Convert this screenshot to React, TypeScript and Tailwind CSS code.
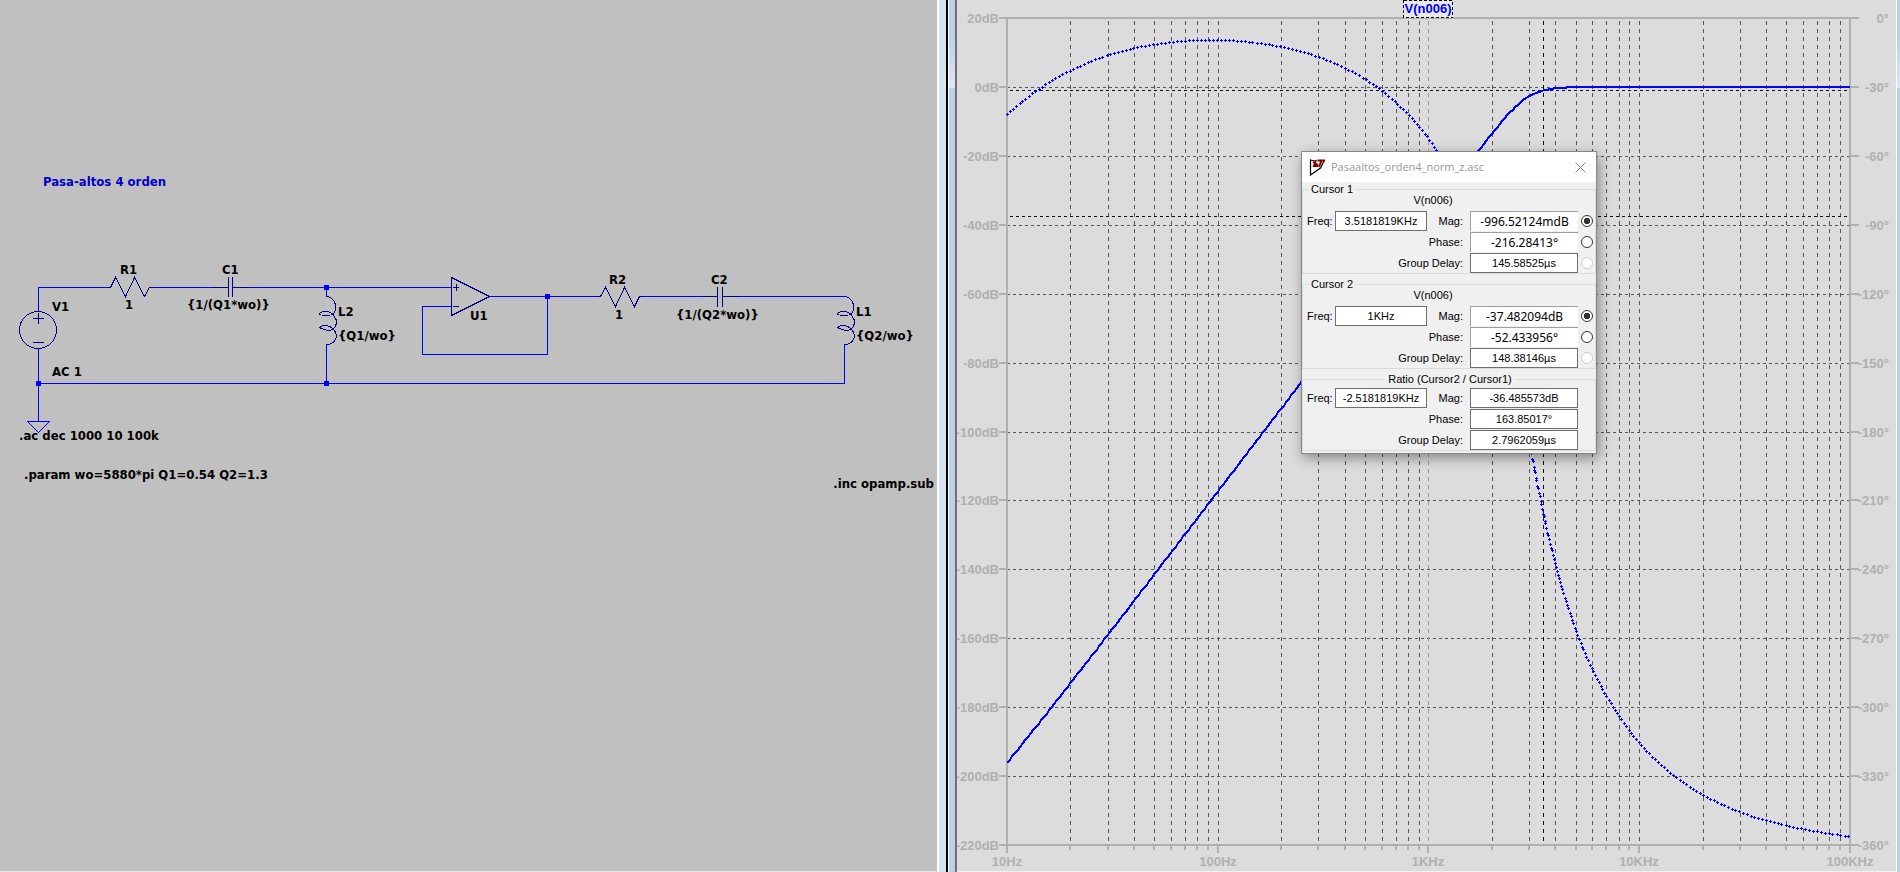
import React from "react";

const CIRCUIT = { f0: 2940, rser: 0.001, gbw: 10e6 };
const PX = { left: 50, decade: 210.7, top: 18, row: 68.92 };
const BLUE = "#0000ff";
const AXIS = "#b0b0b0";
const GRID = "#555555";

type C = [number, number];
const mul = (a: C, b: C): C => [a[0] * b[0] - a[1] * b[1], a[0] * b[1] + a[1] * b[0]];
const div = (a: C, b: C): C => {
  const d = b[0] * b[0] + b[1] * b[1];
  return [(a[0] * b[0] + a[1] * b[1]) / d, (a[1] * b[0] - a[0] * b[1]) / d];
};
const angle = (a: C) => (Math.atan2(a[1], a[0]) * 180) / Math.PI;

/* One series R-C, shunt L section, with the coil's series resistance. */
function section(f: number, q: number): C {
  const r = f / CIRCUIT.f0;
  const zl: C = [CIRCUIT.rser, r * q];
  return div(zl, [1 + zl[0], zl[1] - q / r]);
}

function response(f: number) {
  const buffer = div([1, 0], [1, f / CIRCUIT.gbw]);
  const a = section(f, 0.54);
  const b = section(f, 1.3);
  const h = mul(mul(a, b), buffer);
  return {
    mag: 20 * Math.log10(Math.hypot(h[0], h[1])),
    phase: angle(a) + angle(b) + angle(buffer) - 360,
  };
}

const xOf = (f: number) => PX.left + Math.log10(f / 10) * PX.decade;
const yOfDb = (db: number) => PX.top + ((20 - db) / 20) * PX.row;
const yOfDeg = (deg: number) => PX.top + (-deg / 30) * PX.row;

const samples = Array.from({ length: 1601 }, (_, i) => {
  const f = 10 * Math.pow(10, i / 400);
  const r = response(f);
  return { x: xOf(f), m: yOfDb(r.mag), p: yOfDeg(r.phase) };
});

const magPath =
  "M" + samples.filter((_, i) => i % 5 === 0).map((s) => `${Math.round(s.x)} ${Math.round(s.m)}`).join("L");

const phaseDots: C[] = [];
{
  let run = 4;
  samples.forEach((s, i) => {
    if (i > 0) run += Math.hypot(s.x - samples[i - 1].x, s.p - samples[i - 1].p);
    if (run >= 4) {
      phaseDots.push([Math.round(s.x), Math.round(s.p)]);
      run -= 4;
    }
  });
}
const dotPath = phaseDots.map(([x, y]) => `M${x - 1} ${y}h3v1h-3zM${x} ${y - 1}h1v3h-1z`).join("");

const rows = Array.from({ length: 13 }, (_, i) => i);
const minors: number[] = [];
for (let d = 0; d < 4; d++) for (let k = 1; k < 10; k++) minors.push(k * Math.pow(10, d + 1));
minors.push(100000);

function Plot() {
  const left = Math.round(xOf(10));
  const right = Math.round(xOf(100000));
  const bottom = Math.round(PX.top + 12 * PX.row);
  return (
    <svg
      width="938"
      height="870"
      className="block overflow-visible"
      fontFamily="'Liberation Sans', Arial, sans-serif"
      fontSize="13"
      fontWeight="700"
    >
      <g shapeRendering="crispEdges">
        <g stroke={GRID}>
          {rows.slice(1, 12).map((r) => {
            const y = Math.round(PX.top + r * PX.row) + 0.5;
            return <path key={r} d={`M${left} ${y}H${right}`} strokeDasharray="3 3" />;
          })}
          {minors.slice(1, 36).map((f) => {
            const x = Math.round(xOf(f)) + 0.5;
            return (
              <path key={f} d={`M${x} 21V${bottom}`} strokeDasharray="4 4" stroke={f === 1000 ? "#999999" : GRID} />
            );
          })}
        </g>
        <g stroke="#101010">
          <path d={`M${left + 3} 90.5H${right}`} strokeDasharray="3 3" />
          <path d={`M${left + 3} 216.5H${right}`} strokeDasharray="3 3" />
          <path d={`M${Math.round(xOf(3518.18)) - 0.5} 21V${bottom}`} strokeDasharray="4 4" />
        </g>
        <g stroke={AXIS} strokeWidth="2" fill="none">
          <path
            d={`M${left - 8} 18H${right + 9}M${left} 17V${bottom + 8}M${right} 17V${bottom + 8}M${left - 8} ${bottom}H${right + 9}`}
          />
          {rows.map((r) => {
            const y = Math.round(PX.top + r * PX.row);
            return <path key={r} d={`M${left - 8} ${y}h8M${right} ${y}h9`} />;
          })}
          {minors.map((f, i) => (
            <path key={f} d={`M${Math.round(xOf(f))} ${bottom}v${i % 9 === 0 ? 8 : 5}`} />
          ))}
        </g>
        <path d={dotPath} fill={BLUE} />
        <path d={magPath} stroke={BLUE} strokeWidth="2" fill="none" />
      </g>
      <g fill={AXIS}>
        {rows.map((r) => {
          const y = Math.round(PX.top + r * PX.row) + 5;
          return (
            <React.Fragment key={r}>
              <text x={left - 8} y={y} textAnchor="end">{`${20 - 20 * r}dB`}</text>
              <text x={right + 39} y={y} textAnchor="end">{`${r === 0 ? 0 : -30 * r}°`}</text>
            </React.Fragment>
          );
        })}
        {["10Hz", "100Hz", "1KHz", "10KHz", "100KHz"].map((t, i) => (
          <text key={t} x={Math.round(xOf(Math.pow(10, i + 1)))} y="866" textAnchor="middle">
            {t}
          </text>
        ))}
      </g>
      <rect
        x="446.5"
        y="0.5"
        width="49"
        height="17"
        fill="#e8e8e8"
        stroke="#000"
        strokeDasharray="3 2"
        shapeRendering="crispEdges"
      />
      <text x="471" y="13" fill={BLUE} textAnchor="middle">
        V(n006)
      </text>
    </svg>
  );
}

const coil =
  "M0 0C7 1 10 7 9 13C8 18 5 19 0 19C-4 19 -7 18 -7 17C-6 15 -3 15 0 15C6 15 8 20 10 24C10 29 8 33 3 34C-2 34 -5 32 -7 31C-5 29 -2 29 0 29C6 30 10 35 10 40C9 45 5 48 0 48";

function Schematic() {
  const wire =
    "M38.5 307V287.5H106M153 287.5H212M249 287.5H452M326.5 287V296M326.5 344V383M38.5 353V421M38 383.5H844.5V344M452 306.5H422.5V354.5H547.5V297M490 296.5H598M643 296.5H702M739 296.5H845";
  const nodes: C[] = [
    [326, 287],
    [38, 383],
    [326, 383],
    [547, 296],
  ];
  const notes: [number, number, string][] = [
    [120, 274, "R1"],
    [125, 309, "1"],
    [222, 274, "C1"],
    [187, 309, "{1/(Q1*wo)}"],
    [52, 311, "V1"],
    [52, 376, "AC 1"],
    [338, 316, "L2"],
    [338, 340, "{Q1/wo}"],
    [470, 320, "U1"],
    [609, 284, "R2"],
    [615, 319, "1"],
    [711, 284, "C2"],
    [676, 319, "{1/(Q2*wo)}"],
    [856, 316, "L1"],
    [856, 340, "{Q2/wo}"],
    [19, 440, ".ac dec 1000 10 100k"],
    [24, 479, ".param wo=5880*pi Q1=0.54 Q2=1.3"],
  ];
  return (
    <svg
      width="937"
      height="870"
      className="block"
      fontFamily="'DejaVu Sans Condensed', 'Noto Sans', sans-serif"
      fontSize="13"
      fontWeight="700"
    >
      <g fill="none" stroke="#000080" shapeRendering="crispEdges">
        <path d="M106 287.5H110.5L115.5 277.5L125.5 296.5L134.5 277.5L144.5 296.5L149.5 287.5H153" />
        <path d="M596 296.5H600.5L605.5 287.5L615.5 306.5L624.5 287.5L634.5 306.5L639.5 296.5H643" />
        <path d="M212 287.5H228.5M228.5 277V297M232.5 277V297M232.5 287.5H249" />
        <path d="M702 296.5H717.5M717.5 287V307M722.5 287V307M722.5 296.5H739" />
        <circle cx="38" cy="330" r="18.5" />
        <path d="M38.5 307V312M38.5 348V353M33 318.5H44M38.5 313V324M33 342.5H44" />
        <path d="M451.5 277.5V315.5L489.5 296.5ZM453 287.5H459M456.5 284V291M453 306.5H459" />
        <path d={coil} transform="translate(326.5 296.5)" />
        <path d={coil} transform="translate(844.5 296.5)" />
      </g>
      <path d={wire} fill="none" stroke={BLUE} shapeRendering="crispEdges" />
      <path d="M27.5 421.5H49.5L38.5 432.5Z" fill="none" stroke={BLUE} shapeRendering="crispEdges" />
      {nodes.map(([x, y]) => (
        <rect key={`${x}-${y}`} x={x - 2} y={y - 2} width="5" height="5" fill={BLUE} />
      ))}
      <text x="43" y="186" fill="#0000c8">
        Pasa-altos 4 orden
      </text>
      {notes.map(([x, y, t]) => (
        <text key={`${x}-${y}`} x={x} y={y} fill="#000">
          {t}
        </text>
      ))}
      <text x="934" y="488" fill="#000" textAnchor="end">
        .inc opamp.sub
      </text>
    </svg>
  );
}

type Line = { label: string; value: string; wide?: boolean; state?: "on" | "off" | "disabled" };
type Group = { id: string; title: string; trace?: string; freq: string; lines: Line[] };

const groups: Group[] = [
  {
    id: "c1",
    title: "Cursor 1",
    trace: "V(n006)",
    freq: "3.5181819KHz",
    lines: [
      { label: "Mag:", value: "-996.52124mdB", wide: true, state: "on" },
      { label: "Phase:", value: "-216.28413°", wide: true, state: "off" },
      { label: "Group Delay:", value: "145.58525µs", state: "disabled" },
    ],
  },
  {
    id: "c2",
    title: "Cursor 2",
    trace: "V(n006)",
    freq: "1KHz",
    lines: [
      { label: "Mag:", value: "-37.482094dB", wide: true, state: "on" },
      { label: "Phase:", value: "-52.433956°", wide: true, state: "off" },
      { label: "Group Delay:", value: "148.38146µs", state: "disabled" },
    ],
  },
  {
    id: "ratio",
    title: "Ratio (Cursor2 / Cursor1)",
    freq: "-2.5181819KHz",
    lines: [
      { label: "Mag:", value: "-36.485573dB" },
      { label: "Phase:", value: "163.85017°" },
      { label: "Group Delay:", value: "2.7962059µs" },
    ],
  },
];

const plainBox = "h-5 border border-[#6e6e6e] bg-white text-center text-[11px] outline-none";
const wideBox =
  "h-5 border-t border-l border-[#a0a0a0] bg-white text-center font-['Noto_Sans',sans-serif] text-[12px] outline-none";

function CursorGroup({ g }: { g: Group }) {
  return (
    <fieldset className="border border-[#dcdcdc] pr-[2px] pl-1">
      <legend className={g.trace ? "ml-[2px] px-[2px] leading-[14px]" : "mx-auto px-[3px] leading-[14px]"}>
        {g.title}
      </legend>
      {g.trace ? (
        <div className="-mt-[3px] mb-1 pr-[34px] text-center leading-[14px]">{g.trace}</div>
      ) : (
        <div className="h-[2px]" />
      )}
      <div className="flex flex-col gap-px">
        {g.lines.map((l, i) => (
          <div key={l.label} className="flex h-5 items-center">
            {i === 0 && (
              <>
                <label htmlFor={`${g.id}-freq`} className="w-7">
                  Freq:
                </label>
                <input id={`${g.id}-freq`} defaultValue={g.freq} className={`${plainBox} w-[92px]`} />
              </>
            )}
            <label htmlFor={`${g.id}-${i}`} className="flex-1 pr-[7px] text-right">
              {l.label}
            </label>
            <input
              id={`${g.id}-${i}`}
              defaultValue={l.value}
              className={`${l.wide ? wideBox : plainBox} w-[108px]`}
            />
            <span className="flex w-[15px] justify-end">
              {l.state && (
                <input
                  type="radio"
                  name={g.id}
                  aria-label={`${g.title} ${l.label}`}
                  defaultChecked={l.state === "on"}
                  disabled={l.state === "disabled"}
                  className="size-3 appearance-none rounded-full border border-[#333] bg-white checked:bg-[radial-gradient(circle,#333_0_3px,#fff_3.5px)] disabled:border-[#ccc]"
                />
              )}
            </span>
          </div>
        ))}
      </div>
    </fieldset>
  );
}

function CursorDialog() {
  return (
    <section className="absolute top-[151px] left-[344px] w-[296px] border border-[#888] bg-[#f0f0f0] pb-[2px] font-['Liberation_Sans',Arial,sans-serif] text-[11px] text-black shadow-[2px_4px_12px_rgba(0,0,0,0.4)]">
      <header className="flex h-[30px] items-center bg-white pr-2 pl-[7px]">
        <svg width="17" height="17" viewBox="0 0 17 17" fill="none">
          <path d="M1.5 0.5V16L11.5 9L15.5 1" stroke="#000" strokeWidth="1.2" />
          <path d="M1 1L6 2" stroke="#000" />
          <path d="M7 1L5 7H9M4 3L9 6M8.5 1.5H16M12.5 1.5L10 8" stroke="#800000" strokeWidth="2" />
        </svg>
        <h1 className="ml-[5px] flex-1 font-['Open_Sans','Noto_Sans',sans-serif] text-[11px] text-[#999]">
          Pasaaltos_orden4_norm_z.asc
        </h1>
        <button aria-label="Close" className="flex size-4 items-center justify-center">
          <svg width="11" height="11" viewBox="0 0 11 11">
            <path d="M.5 .5L10.5 10.5M10.5 .5L.5 10.5" stroke="#888" />
          </svg>
        </button>
      </header>
      <div className="flex flex-col gap-[3px]">
        {groups.map((g) => (
          <CursorGroup key={g.id} g={g} />
        ))}
      </div>
    </section>
  );
}

function FrameEdge({ className }: { className: string }) {
  return (
    <div className={`${className} flex shrink-0 flex-col bg-[#b8d0e8]`}>
      <div className="h-[88px] bg-gradient-to-b from-[#b8d0e8] from-40% to-[#dbe8f6]" />
    </div>
  );
}

export default function App() {
  return (
    <main className="flex h-screen overflow-hidden bg-[#dcdcdc]">
      <div className="min-w-0 flex-[937] overflow-hidden border-b border-[#e8e8e8] bg-[#c0c0c0]">
        <Schematic />
      </div>
      <div className="flex shrink-0">
        <div className="w-[2px] bg-white" />
        <div className="w-[7px] bg-[#d6e4f1]" />
        <div className="w-[2px] bg-black" />
        <div className="w-px bg-white" />
        <FrameEdge className="w-[6px]" />
        <div className="w-[2px] bg-[#707070]" />
      </div>
      <div className="relative min-w-0 flex-[939] overflow-hidden border-b border-[#f0f0f0] bg-[#dcdcdc]">
        <Plot />
        <CursorDialog />
      </div>
      <div className="w-px shrink-0 bg-white" />
      <FrameEdge className="w-[3px]" />
    </main>
  );
}
